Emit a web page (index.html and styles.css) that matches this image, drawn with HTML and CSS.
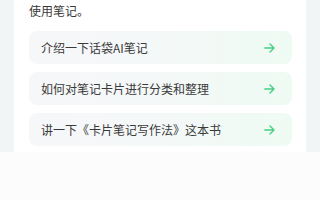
FILE: index.html
```html
<!DOCTYPE html>
<html lang="zh">
<head>
<meta charset="utf-8">
<link rel="stylesheet" href="styles.css">
</head>
<body>
<div class="page">
  <div class="card">
    <p class="intro">使用笔记。</p>
    <ul class="prompts">
      <li class="prompt"><span class="label">介绍一下话袋AI笔记</span><svg class="arrow" viewBox="0 0 11 10" width="11" height="10"><path d="M0.8 5H10M6 1L10 5L6 9" fill="none" stroke="#46cf82" stroke-width="1.4" stroke-linecap="round" stroke-linejoin="round"/></svg></li>
      <li class="prompt"><span class="label">如何对笔记卡片进行分类和整理</span><svg class="arrow" viewBox="0 0 11 10" width="11" height="10"><path d="M0.8 5H10M6 1L10 5L6 9" fill="none" stroke="#46cf82" stroke-width="1.4" stroke-linecap="round" stroke-linejoin="round"/></svg></li>
      <li class="prompt"><span class="label">讲一下《卡片笔记写作法》这本书</span><svg class="arrow" viewBox="0 0 11 10" width="11" height="10"><path d="M0.8 5H10M6 1L10 5L6 9" fill="none" stroke="#46cf82" stroke-width="1.4" stroke-linecap="round" stroke-linejoin="round"/></svg></li>
    </ul>
  </div>
</div>
</body>
</html>
```
FILE: styles.css
```css
html, body {
  margin: 0;
  padding: 0;
}
body {
  width: 320px;
  height: 200px;
  overflow: hidden;
  background: linear-gradient(to bottom, #f2f5f5 0, #f2f5f5 152px, #fcfcfc 152px);
  font-family: "Noto Sans CJK SC", "Noto Sans", sans-serif;
  color: #333333;
}
.page {
  display: flex;
  padding-left: 14px;
}
.card {
  width: 292px;
  box-sizing: border-box;
  background: #ffffff;
  padding: 1px 14px 6px 15px;
}
.intro {
  margin: 0;
  font-size: 12px;
  line-height: 20px;
  color: #383838;
}
.prompts {
  list-style: none;
  margin: 10px 0 0;
  padding: 0;
  display: flex;
  flex-direction: column;
  gap: 8px;
}
.prompt {
  height: 33px;
  box-sizing: border-box;
  border-radius: 8px;
  background: linear-gradient(to right, #f6f7f9 0%, #f5f8f8 45%, #eefbf3 100%);
  display: flex;
  align-items: center;
  justify-content: space-between;
  padding: 0 17px 0 12px;
}
.label {
  font-size: 12px;
  line-height: 17px;
  color: #3a3a3a;
}
.arrow {
  display: block;
}
```
